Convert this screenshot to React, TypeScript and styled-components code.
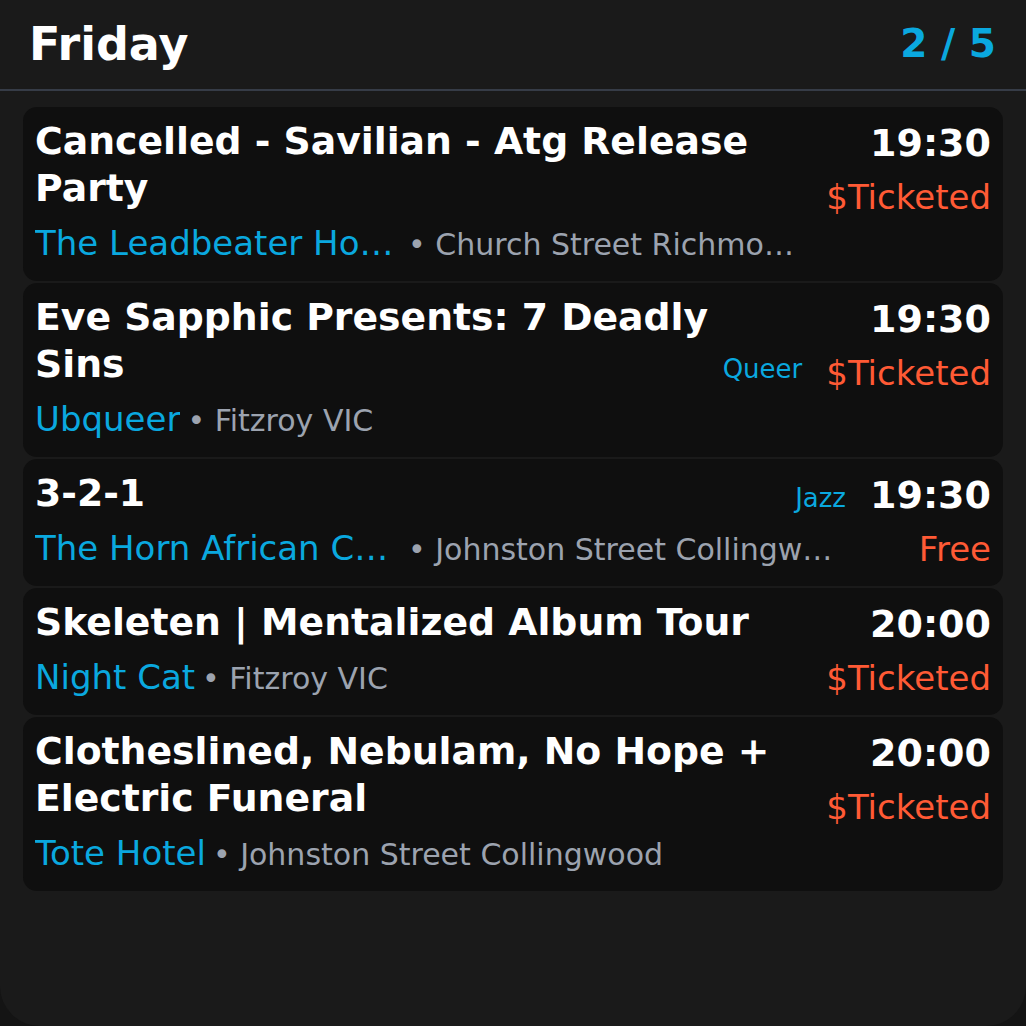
import styled, { createGlobalStyle } from 'styled-components';

type EventItem = {
  title: string;
  venue: string;
  location: string;
  time: string;
  price: string;
  tag?: string;
};

const events: EventItem[] = [
  {
    title: 'Cancelled - Savilian - Atg Release Party',
    venue: 'The Leadbeater Hotel',
    location: 'Church Street Richmond VIC',
    time: '19:30',
    price: '$Ticketed',
  },
  {
    title: 'Eve Sapphic Presents: 7 Deadly Sins',
    venue: 'Ubqueer',
    location: 'Fitzroy VIC',
    time: '19:30',
    price: '$Ticketed',
    tag: 'Queer',
  },
  {
    title: '3-2-1',
    venue: 'The Horn African Cafe',
    location: 'Johnston Street Collingwood',
    time: '19:30',
    price: 'Free',
    tag: 'Jazz',
  },
  {
    title: 'Skeleten | Mentalized Album Tour',
    venue: 'Night Cat',
    location: 'Fitzroy VIC',
    time: '20:00',
    price: '$Ticketed',
  },
  {
    title: 'Clotheslined, Nebulam, No Hope + Electric Funeral',
    venue: 'Tote Hotel',
    location: 'Johnston Street Collingwood',
    time: '20:00',
    price: '$Ticketed',
  },
];

function App() {
  return (
    <>
      <GlobalStyle />
      <Panel>
        <Header>
          <Day>Friday</Day>
          <Pager>2 / 5</Pager>
        </Header>
        <List>
          {events.map((e) => (
            <Card key={e.title}>
              <Main>
                <TitleRow>
                  <Title>{e.title}</Title>
                  {e.tag && <Tag>{e.tag}</Tag>}
                </TitleRow>
                <SubRow>
                  <Venue>{e.venue}</Venue>
                  <Location>• {e.location}</Location>
                </SubRow>
              </Main>
              <Side>
                <Time>{e.time}</Time>
                <Price>{e.price}</Price>
              </Side>
            </Card>
          ))}
        </List>
      </Panel>
    </>
  );
}

export default App;

const GlobalStyle = createGlobalStyle`
  html, body {
    margin: 0;
    padding: 0;
    background: #141414;
  }
  body {
    font-family: 'DejaVu Sans', 'Noto Sans', sans-serif;
  }
  * {
    box-sizing: border-box;
  }
`;

const Panel = styled.div`
  width: 1026px;
  min-height: 1026px;
  background: #1a1a1a;
  border-radius: 0 0 40px 40px;
  overflow: hidden;
`;

const Header = styled.header`
  height: 91px;
  display: flex;
  align-items: center;
  justify-content: space-between;
  padding: 0 30px 0 29px;
  border-bottom: 2px solid #363c47;
`;

const Day = styled.h1`
  margin: 0;
  font-size: 46px;
  font-weight: 700;
  color: #ffffff;
  line-height: 1.2;
`;

const Pager = styled.div`
  font-size: 39px;
  font-weight: 700;
  color: #0aa8df;
  line-height: 1.2;
`;

const List = styled.div`
  display: flex;
  flex-direction: column;
  gap: 2px;
  padding: 16px 23px;
`;

const Card = styled.div`
  display: flex;
  gap: 24px;
  padding: 11px 12px 11px 12px;
  background: #0f0f0f;
  border-radius: 14px;
`;

const Main = styled.div`
  flex: 1;
  min-width: 0;
  display: flex;
  flex-direction: column;
`;

const TitleRow = styled.div`
  display: flex;
  align-items: flex-end;
  gap: 4px;
`;

const Title = styled.div`
  flex: 1;
  font-size: 37.75px;
  font-weight: 700;
  line-height: 47px;
  color: #ffffff;
`;

const Tag = styled.span`
  flex-shrink: 0;
  font-size: 26px;
  line-height: 37px;
  color: #0aa8df;
`;

const SubRow = styled.div`
  display: flex;
  align-items: baseline;
  margin-top: 6px;
  line-height: 51px;
  white-space: nowrap;
  min-width: 0;
`;

const Venue = styled.span`
  flex-shrink: 0;
  max-width: 366px;
  overflow: hidden;
  text-overflow: ellipsis;
  font-size: 34px;
  color: #0aa8df;
`;

const Location = styled.span`
  flex: 0 1 auto;
  min-width: 0;
  margin-left: 7px;
  overflow: hidden;
  text-overflow: ellipsis;
  font-size: 30px;
  color: #9ca3af;
`;

const Side = styled.div`
  flex-shrink: 0;
  display: flex;
  flex-direction: column;
  align-items: flex-end;
`;

const Time = styled.div`
  margin-top: 2px;
  font-size: 38px;
  font-weight: 700;
  line-height: 47px;
  color: #ffffff;
`;

const Price = styled.div`
  margin-top: 5px;
  font-size: 34px;
  line-height: 51px;
  color: #ff5a35;
`;
